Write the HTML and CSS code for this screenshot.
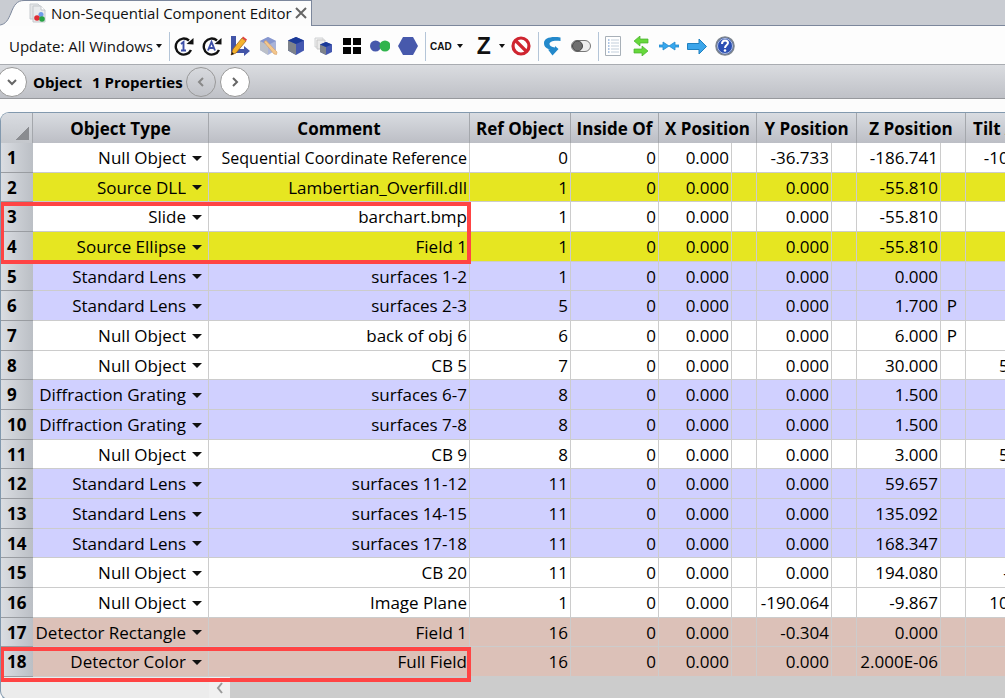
FILE: index.html
```html
<!DOCTYPE html>
<html lang="en">
<head>
  <meta charset="UTF-8" />
  <meta name="viewport" content="width=device-width, initial-scale=1.0"/>
  <title>Non-Sequential Component Editor</title>
  <link rel="stylesheet" href="styles.css">
</head>
<body>
  <header class="tab-bar">
    <svg class="tab-edge" viewBox="0 0 24 26"><path d="M0 26V24.500C6 24 8 20 11 13C14 5 17 .5 24 .5V26z" fill="#fcfcfc"/><path d="M0 25C6 24 8 20 11 13C14 5 17 .5 24 .5" fill="none" stroke="#7c879c"/></svg>
    <div class="tab">
      <svg class="tab-icon" viewBox="0 0 20 20"><path d="M3 1h8l3 3v12H3z" fill="#e4e6e8" stroke="#c8ccd0"/><path d="M6 3h8l4 4v12H6z" fill="#e9ebed" stroke="#c4c8cc"/><path d="M14 3v4h4" fill="#fff" stroke="#c4c8cc"/><circle cx="14" cy="11.500" r="2.500" fill="#6f9be8"/><circle cx="10" cy="15" r="2.800" fill="#e02c34"/><circle cx="15" cy="16" r="2.800" fill="#27a344"/></svg>
      <span>Non-Sequential Component Editor</span>
      <button class="close" aria-label="Close tab"><svg viewBox="0 0 12 12"><path d="M1 1l10 10M11 1L1 11" stroke="#666" stroke-width="2"/></svg></button>
    </div>
  </header>

  <nav class="toolbar">
    <button class="update">Update: All Windows <i class="caret"></i></button>
    <i class="sep"></i>
    <div class="group icons">
      <button aria-label="Update once"><svg viewBox="0 0 20 20"><path d="M15 4.500A8 8 0 1 0 17 14" fill="none" stroke="#111" stroke-width="2.400"/><path d="M12.500 8l7-6v6.500z" fill="#111"/><path d="M7 8L9.500 6v8.500M7 14.500h5" fill="none" stroke="#3d4fa8" stroke-width="1.900"/></svg></button>
      <button aria-label="Update all"><svg viewBox="0 0 20 20"><path d="M15 4.500A8 8 0 1 0 17 14" fill="none" stroke="#111" stroke-width="2.400"/><path d="M12.500 8l7-6v6.500z" fill="#111"/><path d="M6 14.500L9.500 6l3.500 8.500M7.500 12h4" fill="none" stroke="#3d4fa8" stroke-width="1.900"/></svg></button>
      <button aria-label="Edit axes"><svg viewBox="0 0 20 20"><path d="M1 0h5v13h8v-3l6 5-6 5v-3H1z" fill="#4355a8"/><path d="M1 19l2-6L12 2l4 3L6 17z" fill="#f5b32c" stroke="#9a5a12" stroke-width=".7"/><path d="M12 2l1-1.500 4 3L16 5z" fill="#e0403c"/><path d="M1 19l1-3 2 2z" fill="#111"/></svg></button>
      <button aria-label="Edit object"><svg viewBox="0 0 20 20"><path d="M10 1l8 4v9l-8 5-8-5V5z" fill="#a9b3d8"/><path d="M2 5l8 4v10l-8-5z" fill="#bcc0c8"/><path d="M10 1l8 4-8 4-8-4z" fill="#8797cf"/><path d="M6 6l2-1.500L19 16l-.5 2.500L16 18z" fill="#f4c78c" stroke="#d59c62" stroke-width=".6"/></svg></button>
      <button aria-label="Object"><svg viewBox="0 0 20 20"><path d="M10 1l8 3.500v10L10 19l-8-4.500v-10z" fill="#4458b0"/><path d="M2 4.500L10 8v11l-8-4.500z" fill="#7e838b"/><path d="M10 1l8 3.500L10 8 2 4.500z" fill="#1b3a98"/></svg></button>
      <button aria-label="Copy object"><svg viewBox="0 0 20 20"><path d="M1 2h8v9H1z" fill="#f2f2f2" stroke="#d0d2d4"/><path d="M3 4h8v9H3z" fill="#eaeaea" stroke="#c8c8c8"/><path d="M12 6l6 2.500v7.500l-6 3-6-3V8.500z" fill="#4458b0"/><path d="M6 8.500l6 2.500v8l-6-3z" fill="#7e838b"/><path d="M12 6l6 2.500-6 2.500-6-2.500z" fill="#1b3a98"/></svg></button>
      <button aria-label="Grid"><svg viewBox="0 0 20 20"><path d="M1 2h8v7H1zM11 2h8v7h-8zM1 11h8v7H1zM11 11h8v7h-8z" fill="#050505"/></svg></button>
      <button aria-label="Combine"><svg viewBox="0 0 20 20"><circle cx="5.500" cy="10" r="5.500" fill="#4759ac"/><circle cx="15" cy="10" r="5.500" fill="#30b44c"/></svg></button>
      <button aria-label="Polygon"><svg viewBox="0 0 20 20"><path d="M5 1h10l5 9-5 9H5l-5-9z" fill="#4759ac"/></svg></button>
    </div>
    <i class="sep"></i>
    <button class="cad">CAD <i class="caret"></i></button>
    <button class="zed">Z <i class="caret"></i></button>
    <button aria-label="Disable"><svg viewBox="0 0 20 20"><circle cx="10" cy="10" r="8" fill="#fff" stroke="#cf2530" stroke-width="3.200"/><path d="M4.500 4.500l11 11" stroke="#cf2530" stroke-width="3.200"/></svg></button>
    <i class="sep"></i>
    <div class="group icons">
      <button aria-label="Undo"><svg viewBox="0 0 20 20"><path d="M17.500 1.500C8 0 1 2 1 7c0 4 3 6 6.500 6.500H5l4.500 6 6-6.500-3.500-3v1.500C8.500 11 6.500 10 6.500 8c0-2.500 4-4 11-3z" fill="#2389cb"/></svg></button>
      <button aria-label="Toggle"><svg viewBox="0 0 20 20"><rect x=".5" y="4.500" width="19" height="11" rx="5.500" fill="#eee" stroke="#777"/><circle cx="6.500" cy="10" r="5" fill="#707070" stroke="#444"/></svg></button>
    </div>
    <i class="sep"></i>
    <div class="group icons">
      <button aria-label="Text view"><svg viewBox="0 0 20 20"><path d="M2.500.5h15v19h-15z" fill="#fff" stroke="#a8b0b8"/><path d="M5 4h1.500M5 7h1.500M5 10h1.500M5 13h1.500M5 16h1.500" stroke="#5f8cc8"/><path d="M8 4h8M8 7h8M8 10h8M8 13h8M8 16h8" stroke="#c3cfdb"/></svg></button>
      <button aria-label="Swap"><svg viewBox="0 0 20 20"><path d="M3 5l6-5v3h8v4H9v3zM17 15l-6-5v3H3v4h8v3z" fill="#67d83c" stroke="#45b02c" stroke-width=".7"/></svg></button>
      <button aria-label="Collapse"><svg viewBox="0 0 20 20"><path d="M0 9h4V6l6 4-6 4v-3H0zM20 9h-4V6l-6 4 6 4v-3h4z" fill="#36a7ee" stroke="#2188cb" stroke-width=".8"/></svg></button>
      <button aria-label="Go to"><svg viewBox="0 0 20 20"><path d="M.5 7.500H12V3l7.500 7.500L12 18v-4.500H.5z" fill="#3ba5ea" stroke="#2080bf"/></svg></button>
      <button aria-label="Help"><svg viewBox="0 0 20 20"><circle cx="10" cy="10" r="9" fill="#2a4fb4" stroke="#7d858f" stroke-width="1.600"/><circle cx="10" cy="10" r="7.500" fill="none" stroke="#d7ddea" stroke-width=".8"/><path d="M7 8c0-5 6-4 6-1 0 2-3 2-3 5" fill="none" stroke="#fff" stroke-width="2"/><circle cx="10" cy="14.500" r="1.300" fill="#fff"/></svg></button>
    </div>
  </nav>

  <section class="object-bar">
    <button class="round first" aria-label="Expand"><svg viewBox="0 0 12 12"><path d="M2 4l4 4 4-4"/></svg></button>
    <h1>Object</h1>
    <h2>1 Properties</h2>
    <button class="round off" aria-label="Previous object"><svg viewBox="0 0 12 12"><path d="M8 2L4 6l4 4"/></svg></button>
    <button class="round" aria-label="Next object"><svg viewBox="0 0 12 12"><path d="M4 2l4 4-4 4"/></svg></button>
  </section>

  <main class="grid">
    <table>
      <colgroup>
        <col class="c-num"><col class="c-type"><col class="c-comment"><col class="c-ref"><col class="c-inside">
        <col class="c-x"><col class="c-flag"><col class="c-y"><col class="c-flag"><col class="c-z"><col class="c-flag"><col class="c-tilt">
      </colgroup>
      <thead>
        <tr>
          <th class="corner"></th>
          <th>Object Type</th>
          <th>Comment</th>
          <th>Ref Object</th>
          <th>Inside Of</th>
          <th colspan="2">X Position</th>
          <th colspan="2">Y Position</th>
          <th colspan="2">Z Position</th>
          <th class="left">Tilt About X</th>
        </tr>
      </thead>
      <tbody id="rows"></tbody>
    </table>
    <div class="scroll">
      <button aria-label="Scroll left"><svg viewBox="0 0 12 12"><path d="M8 1L4 6l4 5"/></svg></button>
      <div class="thumb"></div>
    </div>
    <div class="mark mark-slide"></div>
    <div class="mark mark-detector"></div>
  </main>

  <script>
    // type, comment, ref object, inside of, x, y, z, z flag, tilt, row colour
    const objects = [
      ["Null Object", "Sequential Coordinate Reference", 0, 0, "0.000", "-36.733", "-186.741", "", "-100.000", ""],
      ["Source DLL", "Lambertian_Overfill.dll", 1, 0, "0.000", "0.000", "-55.810", "", "0.000", "source"],
      ["Slide", "barchart.bmp", 1, 0, "0.000", "0.000", "-55.810", "", "0.000", ""],
      ["Source Ellipse", "Field 1", 1, 0, "0.000", "0.000", "-55.810", "", "0.000", "source"],
      ["Standard Lens", "surfaces 1-2", 1, 0, "0.000", "0.000", "0.000", "", "0.000", "lens"],
      ["Standard Lens", "surfaces 2-3", 5, 0, "0.000", "0.000", "1.700", "P", "0.000", "lens"],
      ["Null Object", "back of obj 6", 6, 0, "0.000", "0.000", "6.000", "P", "0.000", ""],
      ["Null Object", "CB 5", 7, 0, "0.000", "0.000", "30.000", "", "50.000", ""],
      ["Diffraction Grating", "surfaces 6-7", 8, 0, "0.000", "0.000", "1.500", "", "0.000", "lens"],
      ["Diffraction Grating", "surfaces 7-8", 8, 0, "0.000", "0.000", "1.500", "", "0.000", "lens"],
      ["Null Object", "CB 9", 8, 0, "0.000", "0.000", "3.000", "", "50.000", ""],
      ["Standard Lens", "surfaces 11-12", 11, 0, "0.000", "0.000", "59.657", "", "0.000", "lens"],
      ["Standard Lens", "surfaces 14-15", 11, 0, "0.000", "0.000", "135.092", "", "0.000", "lens"],
      ["Standard Lens", "surfaces 17-18", 11, 0, "0.000", "0.000", "168.347", "", "0.000", "lens"],
      ["Null Object", "CB 20", 11, 0, "0.000", "0.000", "194.080", "", "-1.000", ""],
      ["Null Object", "Image Plane", 1, 0, "0.000", "-190.064", "-9.867", "", "100.000", ""],
      ["Detector Rectangle", "Field 1", 16, 0, "0.000", "-0.304", "0.000", "", "0.000", "detector"],
      ["Detector Color", "Full Field", 16, 0, "0.000", "0.000", "2.000E-06", "", "0.000", "detector"]
    ];

    // long comments get a smaller size so they fit the column
    document.getElementById("rows").innerHTML = objects.map((o, i) => `
      <tr class="${o[9]}">
        <th scope="row">${i + 1}</th>
        <td class="type"><div><select aria-label="Object type ${i + 1}"><option>${o[0]}</option></select><i class="caret"></i></div></td>
        <td class="${o[1].length > 28 ? "long" : ""}">${o[1]}</td>
        <td>${o[2]}</td>
        <td>${o[3]}</td>
        <td>${o[4]}</td>
        <td class="flag"></td>
        <td>${o[5]}</td>
        <td class="flag"></td>
        <td>${o[6]}</td>
        <td class="flag">${o[7]}</td>
        <td>${o[8]}</td>
      </tr>`).join('');
  </script>
</body>
</html>
```
FILE: styles.css
```css
* {
  box-sizing: border-box;
}
body {
  margin: 0;
  min-height: 100vh;
  display: flex;
  flex-direction: column;
  overflow: hidden;
  background: #fcfcfc;
  color: #111;
  font-family: "Open Sans", "Noto Sans", sans-serif;
  font-size: 15px;
}
button {
  display: flex;
  align-items: center;
  justify-content: center;
  padding: 0;
  border: 0;
  background: none;
  color: inherit;
  font: inherit;
  white-space: nowrap;
}
button svg {
  width: 20px;
  height: 20px;
  display: block;
}
.caret {
  flex: none;
  border: 3px solid transparent;
  border-top: 4px solid #111;
  border-bottom: 0;
}

.tab-bar {
  display: flex;
  height: 26px;
  background: #c9ccd2;
  box-shadow: inset 0 -1px #7c879c;
}
.tab-edge {
  width: 24px;
  height: 26px;
}
.tab {
  display: flex;
  align-items: center;
  padding: 0 4px 2px 3px;
  background: #fcfcfc;
  border-top: 1px solid #7c879c;
  border-right: 1px solid #7c879c;
  white-space: nowrap;
}
.tab-icon {
  width: 20px;
  height: 20px;
  margin-right: 4px;
}
.close {
  margin-left: 3px;
}
.close svg {
  width: 12px;
  height: 12px;
}

.toolbar {
  display: flex;
  align-items: center;
  height: 38px;
  padding: 2px 0 0 9px;
  background: #fdfdfd;
}
.update {
  gap: 3px;
}
.sep {
  width: 1px;
  height: 29px;
  margin: 0 4px 0 7px;
  background: #b4c5d8;
}
.group {
  display: flex;
  gap: 8px;
}
.cad {
  gap: 5px;
  margin-right: 14px;
  font: bold 10px "Liberation Sans", sans-serif;
}
.zed {
  gap: 8px;
  margin-right: 6px;
  font: bold 23px "Liberation Sans", sans-serif;
}

.object-bar {
  display: flex;
  align-items: center;
  height: 35px;
  background: linear-gradient(#dadce0, #bfc1c7);
  border-top: 1px solid #a9acb1;
  border-bottom: 1px solid #97999d;
}
.object-bar h1, .object-bar h2 {
  margin: 0 0 0 6px;
  font-size: 15px;
  color: #000;
}
.object-bar h2 {
  margin: 0 3px 0 10px;
}
.round {
  width: 30px;
  height: 30px;
  margin-right: 4px;
  border: 1px solid #999;
  border-radius: 50%;
  background: #fff;
}
.round svg {
  width: 12px;
  height: 12px;
  fill: none;
  stroke: #666;
  stroke-width: 2;
}
.round.first {
  margin: 0 0 0 -3px;
}
.round.off {
  background: none;
}
.round.off svg {
  stroke: #888;
}

.grid {
  position: relative;
  flex: 1;
  margin-top: 13px;
  overflow: hidden;
  border: 1px solid #8299ae;
  border-right: 0;
  border-radius: 9px 0 0 9px;
  background: #ececec;
}
table {
  width: 1054px;
  table-layout: fixed;
  border-collapse: separate;
  border-spacing: 0;
  font-size: 17px;
  line-height: 24px;
  color: #000;
}
.c-num { width: 32px; }
.c-type { width: 176px; }
.c-comment { width: 261px; }
.c-ref { width: 101px; }
.c-inside { width: 88px; }
.c-x { width: 73px; }
.c-flag { width: 25px; }
.c-y { width: 75px; }
.c-z { width: 84px; }
th, td {
  height: 30px;
  padding: 1px 2px 0;
  border-right: 1px solid #ccc;
  border-bottom: 1px solid #ccc;
  white-space: nowrap;
  overflow: hidden;
}
td {
  text-align: right;
}
tbody tr:nth-child(3n+2) > * {
  height: 29px;
}
thead th {
  padding: 1px 0 0;
  background: linear-gradient(#d9dce1, #bcbec5);
  border-right-color: #a4a7ac;
  border-bottom: 0;
}
thead .left {
  padding-left: 7px;
  text-align: left;
}
thead .corner {
  background: linear-gradient(135deg, transparent 50%, #8a8c90 50%) no-repeat right 3px bottom 3px / 13px 13px, linear-gradient(#d9dce1, #c4c7cc);
}
tbody {
  background: #fff;
}
tbody th {
  padding-left: 6px;
  text-align: left;
  background: linear-gradient(to right, #dadde2, #bbbfc5);
  border-bottom-color: #999ca1;
  border-right: 0;
}
.source {
  background: #e6e621;
}
.lens {
  background: #d0d0ff;
}
.detector {
  background: #dcc1b8;
}
.long {
  font-size: 16px;
}
.flag {
  padding-right: 8px;
}
.type div {
  display: flex;
  align-items: center;
  gap: 6px;
  padding-right: 4px;
}
.type .caret {
  border-width: 5px 5px 0;
}
select {
  flex: 1;
  min-width: 0;
  height: 24px;
  padding: 0;
  appearance: none;
  border: 0;
  background: none;
  color: inherit;
  font: inherit;
  text-align: right;
  text-align-last: right;
}

.scroll {
  display: flex;
  height: 22px;
  padding-left: 208px;
}
.scroll button {
  width: 21px;
  background: #f0f0f0;
}
.scroll svg {
  width: 12px;
  height: 12px;
  fill: none;
  stroke: #999;
  stroke-width: 2;
}
.thumb {
  flex: 1;
  background: #ccc;
}

/* red callouts over the rows */
.mark {
  position: absolute;
  left: -1px;
  width: 471px;
  border: 4px solid #ff4444;
  pointer-events: none;
}
.mark-slide {
  top: 89px;
  height: 62px;
}
.mark-detector {
  top: 534px;
  height: 35px;
}
```
